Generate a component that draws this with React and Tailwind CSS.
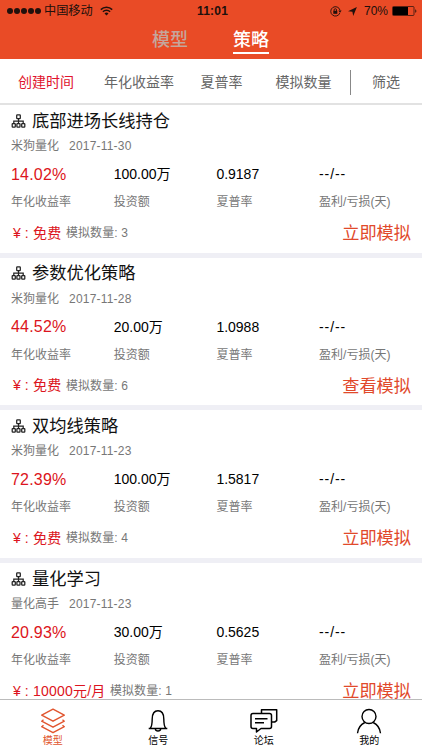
const strategies = [
  { name: "底部进场长线持仓", author: "米狗量化", date: "2017-11-30", rate: "14.02%", amount: "100.00万", sharpe: "0.9187", price: "免费", count: 3, action: "立即模拟" },
  { name: "参数优化策略", author: "米狗量化", date: "2017-11-28", rate: "44.52%", amount: "20.00万", sharpe: "1.0988", price: "免费", count: 6, action: "查看模拟" },
  { name: "双均线策略", author: "米狗量化", date: "2017-11-23", rate: "72.39%", amount: "100.00万", sharpe: "1.5817", price: "免费", count: 4, action: "立即模拟" },
  { name: "量化学习", author: "量化高手", date: "2017-11-23", rate: "20.93%", amount: "30.00万", sharpe: "0.5625", price: "10000元/月", count: 1, action: "立即模拟" },
];

function WifiIcon() {
  return (
    <svg width="13" height="10" viewBox="0 0 13 10" fill="none" stroke="#20100c" strokeWidth="1.5">
      <path d="M0.8 3.6a8.1 8.1 0 0 1 11.4 0" />
      <path d="M2.9 5.8a5.1 5.1 0 0 1 7.2 0" />
      <path d="M6.5 9.6 4.5 7.5a2.9 2.9 0 0 1 4 0z" fill="#20100c" stroke="none" />
    </svg>
  );
}

function RotationLockIcon() {
  return (
    <svg width="12" height="11" viewBox="0 0 12 11" fill="none" stroke="#20100c" strokeWidth="0.9">
      <path d="M9.9 6.9A4.7 4.7 0 1 1 10 4.2" />
      <path d="M8.4 4.6h3.2L10 6.7z" fill="#20100c" stroke="none" />
      <rect x="3.3" y="4.8" width="4" height="3" fill="#20100c" stroke="none" />
      <path d="M4.1 5V3.9a1.2 1.2 0 0 1 2.4 0V5" />
    </svg>
  );
}

function StatusBar() {
  return (
    <div className="flex h-[22px] items-center pl-[7px] pr-[5px] text-[#20100c]">
      <div className="flex w-[190px] items-center">
        <div className="flex gap-[1px]">
          {[0, 1, 2, 3, 4].map((i) => (
            <span key={i} className="h-[6px] w-[6px] rounded-full bg-[#20100c]" />
          ))}
        </div>
        <span className="ml-[3px] mr-[7px] text-[12.2px]">中国移动</span>
        <WifiIcon />
      </div>
      <span className="text-[12px] font-bold tracking-[0.2px]">11:01</span>
      <div className="ml-auto flex items-center">
        <RotationLockIcon />
        <svg className="ml-[6px]" width="9" height="9" viewBox="0 0 9 9">
          <path d="M8.9 0 5.2 8.9 4.4 4.8 0 4.2z" fill="#20100c" />
        </svg>
        <span className="ml-[7px] text-[12px]">70%</span>
        <svg className="ml-[4px]" width="25" height="10" viewBox="0 0 25 10">
          <rect x="0.5" y="0.5" width="21.5" height="9" rx="1" fill="none" stroke="#20100c" strokeWidth="0.7" />
          <rect x="1" y="1" width="15" height="8" fill="#000" />
          <path d="M23.3 3.2c1.4 0.4 1.4 3.2 0 3.6z" fill="#20100c" />
        </svg>
      </div>
    </div>
  );
}

function Header() {
  return (
    <header className="h-[59px] bg-[#e94b26]">
      <StatusBar />
      <div className="flex gap-[45px] pl-[152px] pt-[5px] text-[18px] font-medium leading-[26px]">
        <span className="text-[#c5a59c]">模型</span>
        <span className="h-[27px] border-b-2 border-white text-white">策略</span>
      </div>
    </header>
  );
}

function FilterBar() {
  return (
    <nav className="flex h-[46px] items-center border-b-2 border-[#e2e2e2] pt-[2px] text-[14px] text-[#666]">
      <span className="ml-[18px] w-[86px] text-[#e0142d]">创建时间</span>
      <span className="w-[96.5px]">年化收益率</span>
      <span className="w-[75px]">夏普率</span>
      <span className="w-[74.5px]">模拟数量</span>
      <span className="h-[25px] w-px bg-[#888]" />
      <span className="ml-[21px]">筛选</span>
    </nav>
  );
}

function TreeIcon() {
  return (
    <svg className="mb-[2px]" width="15" height="14" viewBox="0 0 15 14" fill="none" stroke="#222" strokeWidth="1.25">
      <rect x="5.7" y="0.9" width="3.6" height="3.6" rx="0.6" />
      <rect x="1.2" y="9.5" width="3.1" height="3.5" rx="0.6" />
      <rect x="5.9" y="9.5" width="3.1" height="3.5" rx="0.6" />
      <rect x="10.7" y="9.5" width="3.1" height="3.5" rx="0.6" />
      <path d="M7.5 4.5v5M2.8 9.5V7h9.4v2.5" />
    </svg>
  );
}

function StrategyCard({ item }) {
  return (
    <article className="h-[152.7px] shrink-0 border-b-[5px] border-[#efeff5] bg-white px-[11px] pt-[4px] text-[12px] text-[#777]">
      <div className="flex h-[25px] items-center gap-[6px]">
        <TreeIcon />
        <h2 className="text-[17.25px] text-[#111]">{item.name}</h2>
      </div>
      <div className="flex h-[24px] items-center gap-[10px]">
        <span>{item.author}</span>
        <span className="tracking-[0.2px]">{item.date}</span>
      </div>
      <div className="grid h-[33px] grid-cols-[102.7px_102.7px_102.7px_1fr] items-center text-[14px] text-black">
        <span className="text-[16px] tracking-[0.2px] text-[#dc1420]">{item.rate}</span>
        <span>{item.amount}</span>
        <span>{item.sharpe}</span>
        <span className="tracking-[0.9px]">--/--</span>
      </div>
      <div className="grid h-[22px] grid-cols-[102.7px_102.7px_102.7px_1fr] items-center">
        <span>年化收益率</span>
        <span>投资额</span>
        <span>夏普率</span>
        <span className="whitespace-nowrap">盈利/亏损(天)</span>
      </div>
      <div className="flex h-[40px] items-center">
        <span className="ml-[2px] w-[20px] text-[14px] text-[#dc1420]">¥ :</span>
        <span className="text-[14px] tracking-[0.2px] text-[#dc1420]">{item.price}</span>
        <span className="ml-[4.5px] tracking-[0.1px]">模拟数量: {item.count}</span>
        <button className="ml-auto text-[17.2px] leading-[20px] text-[#e1492b]">{item.action}</button>
      </div>
    </article>
  );
}

function TabBar() {
  return (
    <footer className="grid h-[51px] shrink-0 grid-cols-4 border-t border-[#bbb] bg-white text-center text-[10px] text-black">
      <div className="flex flex-col items-center pt-[8px] text-[#e1552f]">
        <svg width="26" height="26" viewBox="0 0 26 26" fill="none" stroke="currentColor" strokeWidth="1.4" strokeLinejoin="round">
          <path d="M13 1.2 24.3 7.2 13 13.2 1.7 7.2z" />
          <path d="M3.5 11.8 1.7 13.2 13 19.2l11.3-6-1.8-1.4" />
          <path d="M3.5 17.3 1.7 18.7 13 24.7l11.3-6-1.8-1.4" />
        </svg>
        <span className="leading-[14px]">模型</span>
      </div>
      <div className="flex flex-col items-center pt-[8px]">
        <svg width="26" height="26" viewBox="0 0 26 26" fill="none" stroke="currentColor" strokeWidth="1.4">
          <path d="M3.7 20.5h18.6M5.2 20.3c2-2 2-4.3 2-9.3 0-5.5 2.3-8.3 5.8-8.3s5.8 2.8 5.8 8.3c0 5 0 7.3 2 9.3M10.3 21c.4 2.7 5 2.7 5.4 0" />
        </svg>
        <span className="leading-[14px]">信号</span>
      </div>
      <div className="flex flex-col items-center pt-[8px]">
        <svg width="30" height="26" viewBox="0 0 30 26" fill="none" stroke="currentColor" strokeWidth="1.5" strokeLinejoin="round">
          <path d="M4 5.5h16.5q2 0 2 2v11q0 2-2 2H12L7.5 24V20.5H4q-2 0-2-2v-11q0-2 2-2z" />
          <path d="M12.5 5.5V1.7H27.7V12.7l-2 1.3h-3M6 10.8h12.5M6 14.8h9" />
        </svg>
        <span className="leading-[14px]">论坛</span>
      </div>
      <div className="flex flex-col items-center pt-[8px]">
        <svg width="26" height="26" viewBox="0 0 26 26" fill="none" stroke="currentColor" strokeWidth="1.4">
          <circle cx="13" cy="8.5" r="7" />
          <path d="M1.5 25.3c.5-5 3.2-8.8 7.3-10.8M24.5 25.3c-.5-5-3.2-8.8-7.3-10.8" />
        </svg>
        <span className="leading-[14px]">我的</span>
      </div>
    </footer>
  );
}

export default function App() {
  return (
    <div className="flex h-[750px] w-[422px] flex-col overflow-hidden bg-white font-['Liberation_Sans','Noto_Sans_CJK_SC',sans-serif]">
      <Header />
      <FilterBar />
      <main className="flex min-h-0 flex-1 flex-col overflow-hidden">
        {strategies.map((item) => (
          <StrategyCard key={item.name} item={item} />
        ))}
      </main>
      <TabBar />
    </div>
  );
}
